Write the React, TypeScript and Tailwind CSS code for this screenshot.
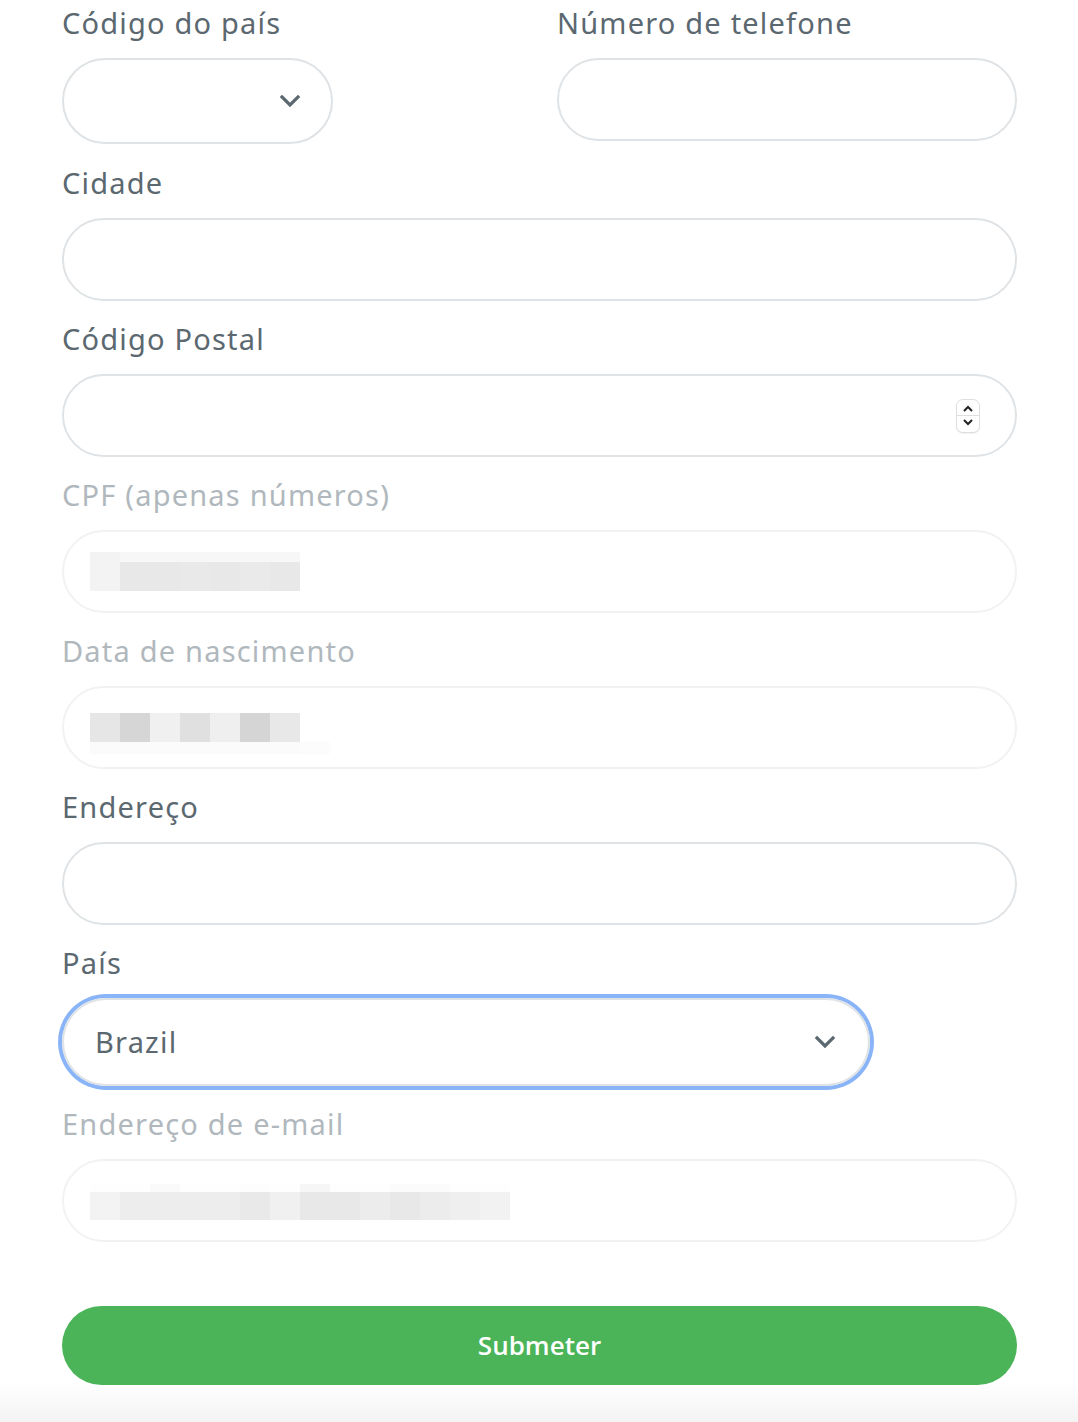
import React from "react";

const font = { fontFamily: "'Noto Sans', Lato, sans-serif" };

function Label({ children, faded }: { children: React.ReactNode; faded?: boolean }) {
  return (
    <div
      className={`h-[36px] leading-[36px] text-[29px] tracking-[1.2px] mb-[17px] ${faded ? "text-[#b0b8bd]" : "text-[#5b6870]"}`}
    >
      {children}
    </div>
  );
}

function Chevron({ className }: { className?: string }) {
  return (
    <svg className={className} width="22" height="14" viewBox="0 0 22 14" fill="none">
      <path d="M3 3l8 8 8-8" stroke="#5b6870" strokeWidth="3.2" strokeLinecap="square" />
    </svg>
  );
}

function Blocks({ rows }: { rows: { h: number; cells: string[] }[] }) {
  return (
    <div className="flex flex-col">
      {rows.map((r, i) => (
        <div key={i} className="flex">
          {r.cells.map((c, j) => (
            <div key={j} className="w-[30px]" style={{ height: r.h, background: c }} />
          ))}
        </div>
      ))}
    </div>
  );
}

export default function App() {
  return (
    <div className="w-[1078px] h-[1422px] bg-white relative overflow-hidden" style={font}>
      <div className="absolute left-0 right-0 bottom-0 h-[40px] bg-gradient-to-b from-white to-[#f3f3f3]" />
      <div className="relative pl-[62px] pr-[61px] pt-[5px]">
        {/* Row 1 */}
        <div className="flex gap-[0px]">
          <div className="w-[495px]">
            <Label>Código do país</Label>
            <div className="w-[271px] h-[86px] rounded-full border-2 border-[#dfe3e6] flex items-center justify-end pr-[30px]">
              <Chevron />
            </div>
          </div>
          <div className="flex-1">
            <Label>Número de telefone</Label>
            <div className="h-[83px] rounded-full border-2 border-[#dfe3e6]" />
          </div>
        </div>

        <div className="mt-[21px]">
          <Label>Cidade</Label>
          <div className="h-[83px] rounded-full border-2 border-[#dfe3e6]" />
        </div>

        <div className="mt-[20px]">
          <Label>Código Postal</Label>
          <div className="h-[83px] rounded-full border-2 border-[#dfe3e6] flex items-center justify-end pr-[35px]">
            <div className="w-[24px] h-[34px] rounded-[7px] border border-[#dedede] bg-white flex flex-col items-center justify-center shadow-[0_1px_1px_rgba(0,0,0,0.06)]">
              <svg width="12" height="8" viewBox="0 0 12 8" fill="none">
                <path d="M2 6l4-4 4 4" stroke="#222" strokeWidth="2" />
              </svg>
              <div className="w-full h-px bg-[#dedede] my-[2px]" />
              <svg width="12" height="8" viewBox="0 0 12 8" fill="none">
                <path d="M2 2l4 4 4-4" stroke="#222" strokeWidth="2" />
              </svg>
            </div>
          </div>
        </div>

        <div className="mt-[20px]">
          <Label faded>CPF (apenas números)</Label>
          <div className="h-[83px] rounded-full border-2 border-[#f0f2f3] flex items-center pl-[26px]">
            <div className="flex">
              <div className="w-[30px] h-[39px] bg-[#f3f3f3]" />
              <Blocks
                rows={[
                  { h: 10, cells: ["#f7f7f7", "#f7f7f7", "#f7f7f7", "#f7f7f7", "#f7f7f7", "#f7f7f7"] },
                  { h: 29, cells: ["#e8e8e8", "#e8e8e8", "#e9e9e9", "#e8e8e8", "#eaeaea", "#e8e8e8"] },
                ]}
              />
            </div>
          </div>
        </div>

        <div className="mt-[20px]">
          <Label faded>Data de nascimento</Label>
          <div className="h-[83px] rounded-full border-2 border-[#f0f2f3] flex items-center pl-[26px]">
            <div className="mt-[12px]">
              <Blocks
                rows={[
                  { h: 29, cells: ["#e6e6e6", "#d6d6d6", "#f0f0f0", "#e0e0e0", "#efefef", "#d5d5d5", "#e8e8e8"] },
                  { h: 12, cells: ["#fbfbfb", "#fbfbfb", "#fbfbfb", "#fbfbfb", "#fbfbfb", "#fbfbfb", "#fbfbfb", "#fcfcfc"] },
                ]}
              />
            </div>
          </div>
        </div>

        <div className="mt-[20px]">
          <Label>Endereço</Label>
          <div className="h-[83px] rounded-full border-2 border-[#dfe3e6]" />
        </div>

        <div className="mt-[20px]">
          <Label>País</Label>
          <div className="w-[808px] h-[88px] rounded-full border-2 border-[#dfe3e6] shadow-[0_0_0_4px_#8ab4f8] flex items-center justify-between pl-[31px] pr-[32px]">
            <span className="text-[29px] tracking-[1.2px] text-[#5b6870]">Brazil</span>
            <Chevron />
          </div>
        </div>

        <div className="mt-[20px]">
          <Label faded>Endereço de e-mail</Label>
          <div className="h-[83px] rounded-full border-2 border-[#f0f2f3] flex items-center pl-[26px]">
            <div className="mt-[2px]">
              <Blocks
                rows={[
                  { h: 8, cells: ["#fefefe", "#fefefe", "#fafafa", "#fefefe", "#fefefe", "#fdfdfd", "#fefefe", "#f6f6f6", "#fefefe", "#fefefe", "#fbfbfb", "#fbfbfb", "#fefefe", "#fefefe"] },
                  { h: 28, cells: ["#f3f3f3", "#ededed", "#ededed", "#ededed", "#ededed", "#e9e9e9", "#f0f0f0", "#e8e8e8", "#e8e8e8", "#ececec", "#e8e8e8", "#ececec", "#efefef", "#f2f2f2"] },
                ]}
              />
            </div>
          </div>
        </div>

        <button
          className="mt-[64px] w-full h-[79px] rounded-full bg-[#4bb458] text-white text-[26px] font-semibold"
          style={{ fontFamily: "'Open Sans', 'Noto Sans', sans-serif" }}
        >
          Submeter
        </button>
      </div>
    </div>
  );
}
